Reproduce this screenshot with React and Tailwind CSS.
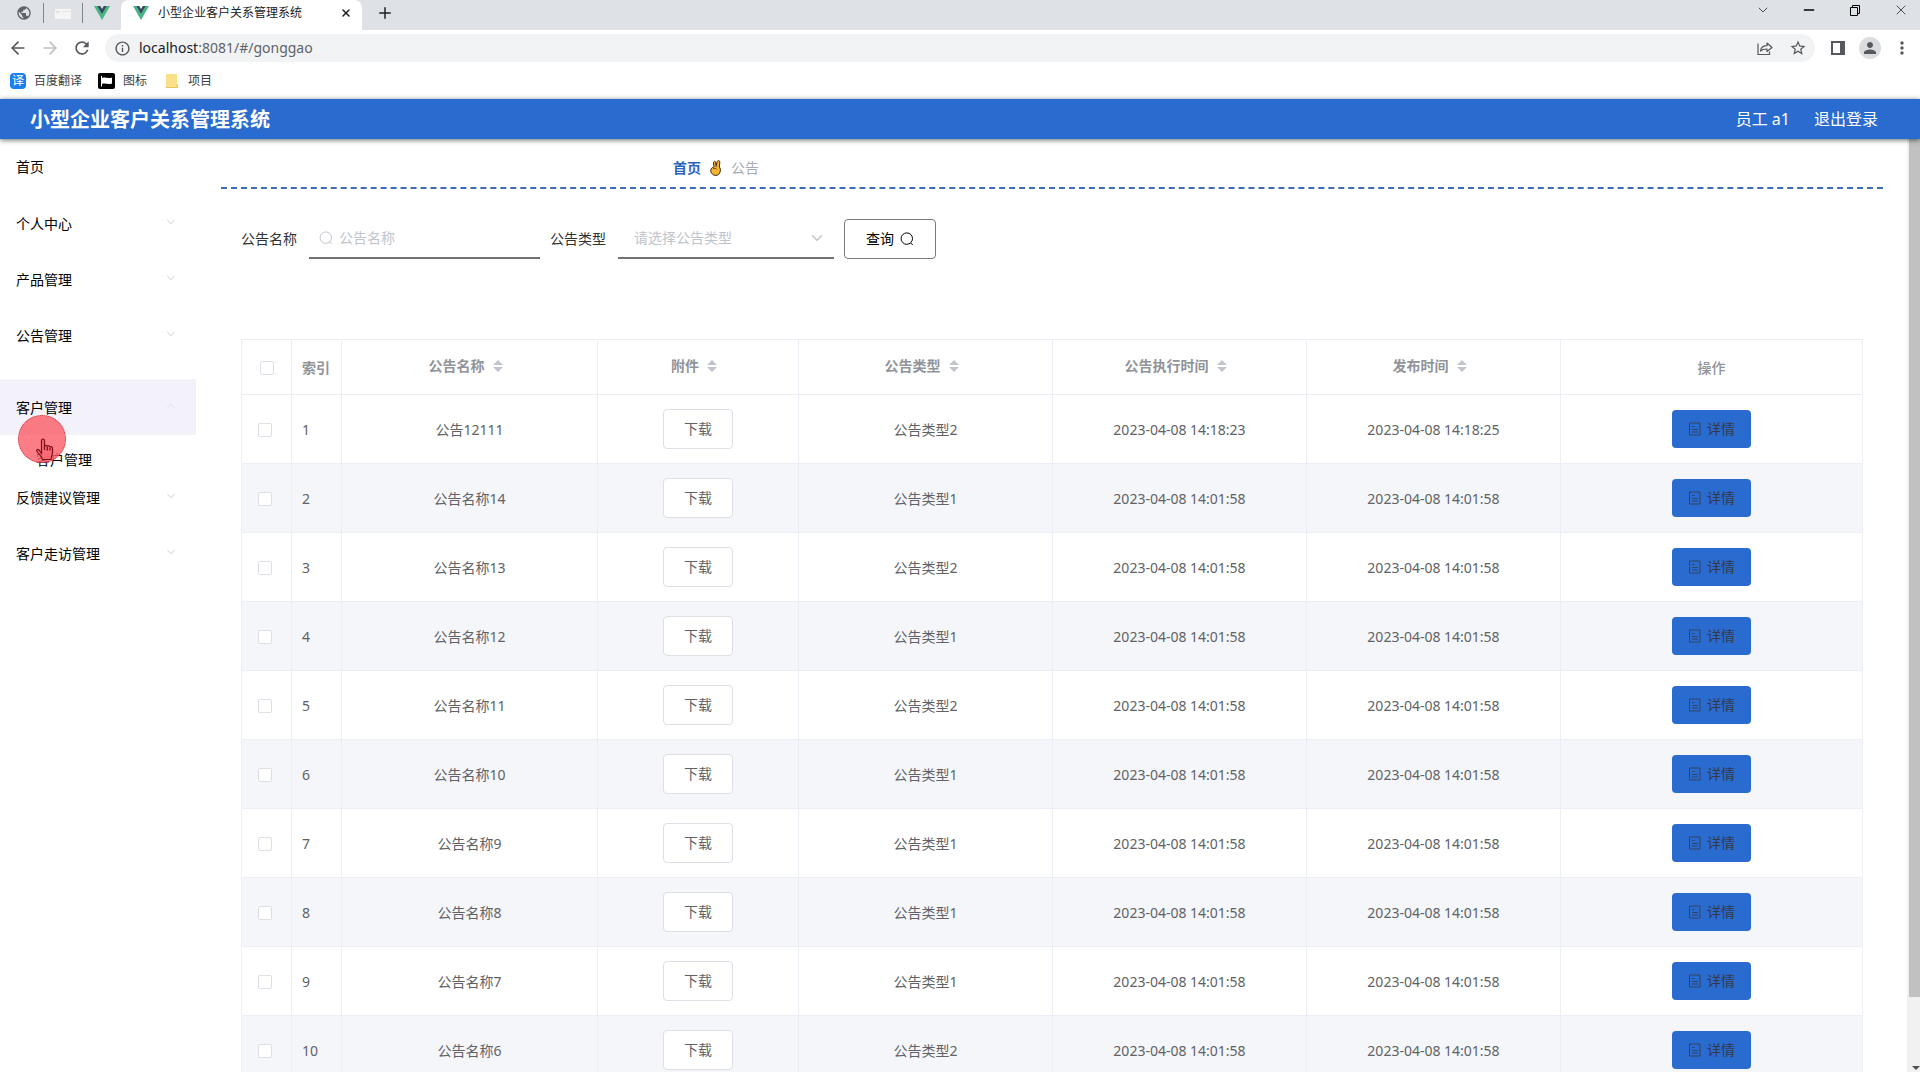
import React, { useState } from "react";
import { ArrowLeft, ArrowRight, ChevronDown, Minus, Plus, X } from "lucide-react";
import { MdRefresh, MdInfoOutline, MdStarBorder, MdPerson, MdPublic, MdMoreVert } from "react-icons/md";

const TITLE = "小型企业客户关系管理系统";

const menus = [
  { name: "首页", leaf: true },
  { name: "个人中心" },
  { name: "产品管理" },
  { name: "公告管理" },
  { name: "客户管理", children: ["客户管理"] },
  { name: "反馈建议管理" },
  { name: "客户走访管理" },
];

const columns = ["公告名称", "附件", "公告类型", "公告执行时间", "发布时间"];

const notices = [
  { id: 1, name: "公告12111", type: "公告类型2", start: "2023-04-08 14:18:23", created: "2023-04-08 14:18:25" },
  { id: 2, name: "公告名称14", type: "公告类型1", start: "2023-04-08 14:01:58", created: "2023-04-08 14:01:58" },
  { id: 3, name: "公告名称13", type: "公告类型2", start: "2023-04-08 14:01:58", created: "2023-04-08 14:01:58" },
  { id: 4, name: "公告名称12", type: "公告类型1", start: "2023-04-08 14:01:58", created: "2023-04-08 14:01:58" },
  { id: 5, name: "公告名称11", type: "公告类型2", start: "2023-04-08 14:01:58", created: "2023-04-08 14:01:58" },
  { id: 6, name: "公告名称10", type: "公告类型1", start: "2023-04-08 14:01:58", created: "2023-04-08 14:01:58" },
  { id: 7, name: "公告名称9", type: "公告类型1", start: "2023-04-08 14:01:58", created: "2023-04-08 14:01:58" },
  { id: 8, name: "公告名称8", type: "公告类型1", start: "2023-04-08 14:01:58", created: "2023-04-08 14:01:58" },
  { id: 9, name: "公告名称7", type: "公告类型1", start: "2023-04-08 14:01:58", created: "2023-04-08 14:01:58" },
  { id: 10, name: "公告名称6", type: "公告类型2", start: "2023-04-08 14:01:58", created: "2023-04-08 14:01:58" },
];

const VueLogo = () => (
  <svg className="h-4 w-4 shrink-0" viewBox="0 0 16 16">
    <path d="M0 1h3.2L8 9.3 12.800 1H16L8 15z" fill="#41b883" />
    <path d="M3.200 1H6.200L8 4.100 9.800 1h3L8 9.300z" fill="#35495e" />
  </svg>
);

const SearchIcon = ({ className }) => (
  <svg className={className} viewBox="0 0 14 14" fill="none" stroke="currentColor" strokeWidth="1">
    <circle cx="6.800" cy="6.600" r="5.700" />
    <path d="M10.600 10.800l2.200 2.300" />
  </svg>
);

const TicketsIcon = () => (
  <svg className="h-3.5 w-3.5" viewBox="0 0 14 14" fill="none" stroke="currentColor" strokeWidth=".8">
    <path d="M1.500 1h10.500v12H1.500zM4 4.500h2.500M4 7.500h6M4 10h6" />
  </svg>
);

const SortCaret = () => (
  <svg className="h-3 w-[10px]" viewBox="0 0 10 12" fill="#c0c4cc">
    <path d="M5 0l5 5H0zM0 7h10l-5 5z" />
  </svg>
);

const VictoryHand = () => (
  <svg className="h-4 w-3" viewBox="0 0 12 16">
    <path
      d="M4.200 1.400c.7-.3 1.300.1 1.400.8l.5 3.300 1.100-4c.3-.8 1-1.100 1.700-.9.700.2 1 .9.900 1.600L9.300 7c1 1.200 1.300 2.700 1 4.200-.5 2.500-2.200 4.200-4.500 4.200-2.700 0-4.600-1.800-5-4.300-.2-1.600.5-3 1.700-3.600l1.500-.6-.5-4.200c0-.6.200-1.100.7-1.300z"
      fill="#f9b52d"
      stroke="#3a2a1c"
      strokeWidth="1"
    />
    <path d="M3 8.800c1.500-.8 3.200-.6 3.800.5M6.100 5.500l.2 1.500" fill="none" stroke="#3a2a1c" strokeWidth=".8" />
  </svg>
);

const BrowserBar = () => (
  <div className="shrink-0 bg-white">
    <div className="flex h-[30px] items-center bg-[#dee1e6] text-[#202124]">
      <div className="flex h-full w-[121px] items-center justify-between pr-[11px] pb-1 pl-4">
        <MdPublic className="h-4 w-4 text-[#5f6368]" />
        <span className="h-5 w-px bg-[#80868b]" />
        <svg className="h-3 w-4" viewBox="0 0 16 12">
          <path d="M0 0h16v12H0z" fill="#f4f5f4" />
          <path d="M0 0h16v2H0z" fill="#dfe5e2" />
          <path d="M1 4h4v2H1zM7 4h8v1H7z" fill="#e9e4da" />
        </svg>
        <span className="h-5 w-px bg-[#80868b]" />
        <VueLogo />
      </div>
      <div className="flex h-full w-[241px] items-center rounded-t-lg bg-white pr-2 pb-1 pl-3">
        <VueLogo />
        <span className="ml-[9px] flex-1 text-xs leading-4">{TITLE}</span>
        <button aria-label="关闭标签页" className="flex h-4 w-4 items-center justify-center">
          <X className="h-3 w-3" strokeWidth={3} />
        </button>
      </div>
      <button aria-label="新标签页" className="ml-[14px] pb-1">
        <Plus className="h-[18px] w-[18px]" strokeWidth={2} />
      </button>
      <div className="ml-auto flex h-full items-start gap-[30px] pt-[2px] pr-[11px] text-black">
        <button aria-label="搜索标签页"><ChevronDown className="h-4 w-4" strokeWidth={1} /></button>
        <button aria-label="最小化"><Minus className="h-4 w-4" strokeWidth={2} /></button>
        <button aria-label="还原">
          <svg className="h-4 w-4" viewBox="0 0 16 16" fill="none" stroke="currentColor">
            <path d="M3.500 5.500h7v8h-7zM5.500 5V3.500h7v8H11" />
          </svg>
        </button>
        <button aria-label="关闭"><X className="h-4 w-4" strokeWidth={1} /></button>
      </div>
    </div>

    <div className="flex h-9 items-center pl-2 text-[#55585c]">
      <button aria-label="后退"><ArrowLeft className="h-5 w-5" strokeWidth={2} /></button>
      <button aria-label="前进" className="ml-3 text-[#bcbec1]"><ArrowRight className="h-5 w-5" strokeWidth={2} /></button>
      <button aria-label="刷新" className="ml-3"><MdRefresh className="h-5 w-5" /></button>
      <div className="ml-[13px] flex h-7 flex-1 items-center rounded-full bg-[#f1f3f4] pr-2 pl-[9px]">
        <MdInfoOutline className="h-[17px] w-[17px]" />
        <span className="ml-2 flex-1 text-sm leading-5 text-[#5f6368]">
          <span className="text-[#202124]">localhost</span>:8081/#/gonggao
        </span>
        <button aria-label="分享" className="mr-4">
          <svg className="h-4 w-4" viewBox="0 0 16 16" fill="none" stroke="currentColor" strokeWidth="1.200">
            <path d="M1 3.500V14.500h11.500v-3" />
            <path d="M3.500 11c.5-3.500 3-5.300 6.500-5.300V3l5 4.500-5 4V9c-3 0-5 .5-6.500 2z" strokeLinejoin="round" />
          </svg>
        </button>
        <button aria-label="收藏"><MdStarBorder className="h-[18px] w-[18px]" /></button>
      </div>
      <button aria-label="侧边栏" className="ml-4">
        <svg className="h-[14px] w-[14px]" viewBox="0 0 14 14">
          <path d="M1 1h12v12H1z" fill="none" stroke="currentColor" strokeWidth="2" />
          <path d="M9 0h5v14H9z" fill="currentColor" />
        </svg>
      </button>
      <button aria-label="个人资料" className="ml-[14px] flex h-[22px] w-[22px] items-center justify-center rounded-full bg-[#dadce0]">
        <MdPerson className="h-[18px] w-[18px]" />
      </button>
      <button aria-label="更多" className="mr-2 ml-[11px]"><MdMoreVert className="h-5 w-5" /></button>
    </div>

    <nav className="flex h-[33px] items-center pb-1 pl-[10px] text-xs leading-4 text-[#3c4043]">
      <a href="#" className="flex items-center gap-2">
        <span className="flex h-4 w-4 items-center justify-center rounded-sm bg-[#1a7ff0] text-white">译</span>
        百度翻译
      </a>
      <a href="#" className="ml-4 flex items-center gap-2">
        <svg className="h-4 w-[17px]" viewBox="0 0 17 16">
          <rect width="17" height="16" rx="2" fill="#000" />
          <path d="M3.500 3v10.500" stroke="#fff" />
          <path d="M4 5c3.500-1.500 6 1.200 10-.5v6c-4 1.500-6.500-1-10 .5z" fill="#fff" />
        </svg>
        图标
      </a>
      <a href="#" className="ml-[19px] flex items-center gap-[10px]">
        <svg className="h-[14px] w-3" viewBox="0 0 12 14">
          <path d="M0 0h11v10h1v4H0z" fill="#fbe08a" />
          <path d="M11 10v4M0 13.500h12" stroke="#e8c45a" />
        </svg>
        项目
      </a>
    </nav>
  </div>
);

const Sidebar = () => (
  <aside className="relative w-[196px] shrink-0 text-sm text-black">
    <ul>
      {menus.map((menu) => (
        <li key={menu.name} className={menu.children ? "mt-[15px]" : menu.leaf ? "mb-px" : ""}>
          <a
            href="#"
            className={`flex h-14 items-center justify-between pr-[18px] pl-4 ${menu.children ? "bg-[#f3f1f9] pt-0.5" : ""}`}
          >
            {menu.name}
            {!menu.leaf && (
              <ChevronDown
                className={`mb-1 h-3.5 w-3.5 ${menu.children ? "rotate-180 text-[#e9e6ef]" : "text-[#e6e0e6]"}`}
                strokeWidth={2}
              />
            )}
          </a>
          {menu.children && (
            <ul className="flex h-[35px] items-end pb-px pl-9 leading-[18px]">
              {menu.children.map((child) => (
                <li key={child}><a href="#">{child}</a></li>
              ))}
            </ul>
          )}
        </li>
      ))}
    </ul>
    {/* mouse highlight */}
    <div className="absolute top-[276px] left-[18px] h-12 w-12 rounded-full border border-dotted border-[#c2303c] bg-[#fb5c66]/80">
      <svg className="absolute top-[22px] left-4 h-6 w-5" viewBox="0 0 20 24" fill="#fa6a74" stroke="#7a1018" strokeWidth="1.200">
        <path d="M6.500 15.500V2.500c0-2 3-2 3 0v6c0-1.500 2.800-1.500 2.800.3 0-1.500 2.700-1.300 2.700.5 0-1.200 2.500-1 2.500.7v5c0 2-1.500 3.500-1.500 6.500H7.500c0-2.500-3-4.500-5.500-8-1.200-1.700.8-2.700 2-1.500z" />
        <path d="M9.500 8v4M12.300 9v3.500M15 9.500v3" />
      </svg>
    </div>
  </aside>
);

const SearchForm = () => {
  const [name, setName] = useState("");
  const [type, setType] = useState("");

  return (
    <form className="flex items-center text-sm text-[#303133]" onSubmit={(e) => e.preventDefault()}>
      <label htmlFor="name" className="mr-3">公告名称</label>
      <div className="flex h-10 w-[231px] items-center gap-[6px] border-b-2 border-[#757171] pl-[10px] text-[#c0c4cc]">
        <SearchIcon className="h-3.5 w-3.5 shrink-0" />
        <input
          id="name"
          type="text"
          placeholder="公告名称"
          value={name}
          onChange={(e) => setName(e.target.value)}
          className="w-full min-w-0 text-[#606266] outline-none placeholder:text-[#c0c4cc]"
        />
      </div>
      <label htmlFor="type" className="mr-3 ml-[10px]">公告类型</label>
      <div className="grid h-10 w-[216px] items-center border-b-2 border-[#757171] text-[#c0c4cc]">
        <select
          id="type"
          value={type}
          onChange={(e) => setType(e.target.value)}
          className="col-start-1 row-start-1 h-full w-full appearance-none pl-4 outline-none"
        >
          <option value="">请选择公告类型</option>
          <option value="1">公告类型1</option>
          <option value="2">公告类型2</option>
        </select>
        <ChevronDown className="pointer-events-none col-start-1 row-start-1 mr-2 h-[18px] w-[18px] justify-self-end" strokeWidth={2} />
      </div>
      <button className="ml-[10px] flex h-10 items-center gap-[6px] rounded border border-[#7a7a7a] px-[21px] text-black">
        查询
        <SearchIcon className="h-3.5 w-3.5" />
      </button>
    </form>
  );
};

const CheckBox = ({ label }) => (
  <input
    type="checkbox"
    aria-label={label}
    className="block h-3.5 w-3.5 appearance-none rounded-xs border border-[#dcdfe6] bg-white checked:bg-[#2a6bcf]"
  />
);

const NoticeTable = () => (
  <table className="mt-20 w-full table-fixed border-separate border-spacing-0 border-t border-l border-[#ebeef5] text-center text-sm text-[#606266] [&_td]:border-r [&_td]:border-b [&_td]:border-[#ebeef5] [&_th]:border-r [&_th]:border-b [&_th]:border-[#ebeef5]">
    <colgroup>
      <col className="w-[50px]" />
      <col className="w-[50px]" />
      <col className="w-[256px]" />
      <col className="w-[201px]" />
      <col className="w-[254px]" />
      <col className="w-[254px]" />
      <col className="w-[254px]" />
      <col className="w-[302px]" />
    </colgroup>
    <thead className="text-[#909399]">
      <tr className="h-[55px]">
        <th className="pt-px pl-[18px]"><CheckBox label="全选" /></th>
        <th className="pt-0.5 pl-[10px] text-left font-bold">索引</th>
        {columns.map((col) => (
          <th key={col} className="pr-2 pb-1 font-bold">
            <button className="inline-flex items-center gap-2 align-middle">
              {col}
              <SortCaret />
            </button>
          </th>
        ))}
        <th className="pt-0.5 font-medium">操作</th>
      </tr>
    </thead>
    <tbody>
      {notices.map((item) => (
        <tr key={item.id} className="h-[69px] even:bg-[#f5f6fa]">
          <td className="pt-0.5 pl-4"><CheckBox label={item.name} /></td>
          <td className="pt-0.5 pl-[10px] text-left">{item.id}</td>
          <td className="pt-0.5">{item.name}</td>
          <td>
            <button className="h-10 rounded border border-[#dcdfe6] bg-white px-5 align-middle">下载</button>
          </td>
          <td className="pt-0.5">{item.type}</td>
          <td className="pt-0.5">{item.start}</td>
          <td className="pt-0.5">{item.created}</td>
          <td>
            <button className="inline-flex h-[38px] items-center gap-[5px] rounded bg-[#2a6bcf] px-4 align-middle text-[#333a48]">
              <TicketsIcon />
              详情
            </button>
          </td>
        </tr>
      ))}
    </tbody>
  </table>
);

const App = () => {
  return (
    <div className="flex h-screen flex-col overflow-hidden bg-white font-['Noto_Sans','Noto_Sans_CJK_SC',sans-serif]">
      <BrowserBar />
      <header className="z-10 flex h-10 shrink-0 items-center bg-[#2a6bcf] pr-[42px] pl-[30px] text-white shadow-[0_1px_5px_rgba(0,0,0,0.6)]">
        <h1 className="pt-0.5 text-xl font-bold">{TITLE}</h1>
        <span className="ml-auto">员工 a1</span>
        <button className="ml-6">退出登录</button>
      </header>

      <div className="flex min-h-0 flex-1">
        <Sidebar />
        <main className="min-w-0 flex-1 overflow-hidden pr-6 pl-[25px]">
          <nav className="flex h-[50px] items-center border-b-2 border-dashed border-[#3f6cb4] pt-2.5 pl-[452px] text-sm">
            <a href="#" className="font-bold text-[#2a62c0]">首页</a>
            <span className="mx-[9px]"><VictoryHand /></span>
            <span className="text-[#a6abb6]">公告</span>
          </nav>
          <div className="px-5 pt-[30px]">
            <SearchForm />
            <NoticeTable />
          </div>
        </main>
        {/* scrollbar */}
        <div className="flex w-[13px] shrink-0 flex-col items-end justify-between bg-[#f1f1f1]">
          <div className="h-[92%] w-[11px] bg-[#c1c1c1]" />
          <svg className="mb-[2px] h-1 w-2" viewBox="0 0 8 4" fill="#505050">
            <path d="M0 0h8L4 4z" />
          </svg>
        </div>
      </div>
    </div>
  );
};

export default App;
